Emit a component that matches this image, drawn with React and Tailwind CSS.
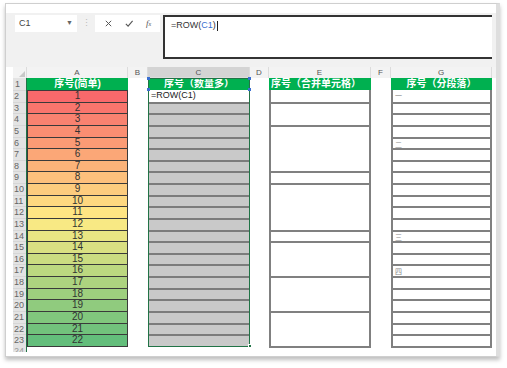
import React from "react";

const FONT = "font-['Liberation_Sans','Noto_Sans_CJK_SC',sans-serif]";
const ROWS = Array.from({ length: 22 }, (_, i) => i + 1);
const MERGED = [1, 2, 4, 1, 4, 1, 3, 3, 3];
const G_LABELS = { 1: "一", 5: "二", 13: "三", 16: "四" };
const RH = 11.64;

// excel 3-colour scale: red -> yellow -> green
function scaleColor(v) {
  const lo = [248, 105, 107];
  const mid = [255, 235, 132];
  const hi = [99, 190, 123];
  const m = 11.5;
  let a, b, t;
  if (v <= m) {
    a = lo;
    b = mid;
    t = (v - 1) / (m - 1);
  } else {
    a = mid;
    b = hi;
    t = (v - m) / (22 - m);
  }
  const c = a.map((x, i) => Math.round(x + (b[i] - x) * t));
  return `rgb(${c[0]},${c[1]},${c[2]})`;
}

function Header({ children, className = "" }) {
  return (
    <div
      className={`h-[12px] bg-[#00b050] text-white text-[10px] leading-[12px] font-bold text-center whitespace-nowrap overflow-hidden ${className}`}
    >
      {children}
    </div>
  );
}

function Toolbar() {
  return (
    <div className="h-[54px] bg-[#f1f1f1] flex items-start pt-[2px] pl-[9px] pr-[4px]">
      <div className="w-[62px] h-[17px] bg-white flex items-center justify-between px-[4px] text-[9px] text-[#444]">
        <span>C1</span>
        <span className="text-[7px] text-[#666]">▼</span>
      </div>
      <div className="w-[18px] h-[17px] flex items-center justify-center text-[9px] text-[#bbb]">⋮</div>
      <div className="w-[65px] h-[17px] bg-white flex items-center justify-around px-[3px] text-[#555]">
        <svg width="9" height="9" viewBox="0 0 10 10" fill="none" stroke="#555" strokeWidth="1.1">
          <path d="M2 2 L8 8 M8 2 L2 8" />
        </svg>
        <svg width="10" height="9" viewBox="0 0 10 10" fill="none" stroke="#555" strokeWidth="1.2">
          <path d="M1.5 5.5 L4 8 L9 2" />
        </svg>
        <span className="italic text-[9px] font-['Liberation_Serif',serif]">
          f<span className="text-[6px]">x</span>
        </span>
      </div>
      <div className="ml-[3px] flex-1 h-[44px] bg-white border-y-2 border-l-2 border-[#333] pl-[6px] pt-[3px] text-[9px] text-[#333] leading-[11px]">
        =ROW(<span className="text-[#3a6fd1]">C1</span>)
        <span className="inline-block w-px h-[10px] bg-[#222] align-middle ml-px" />
      </div>
    </div>
  );
}

function ColLetters() {
  const cols = [
    ["", "w-[14px]"],
    ["A", "w-[101px]"],
    ["B", "w-[20px]"],
    ["C", "w-[102px] bg-[#d4d4d4] border-b border-[#217346]"],
    ["D", "w-[19px]"],
    ["E", "w-[102px]"],
    ["F", "w-[20px]"],
    ["G", "w-[101px]"],
  ];
  return (
    <div className="h-[11px] flex bg-[#f3f3f3] text-[8px] text-[#555] leading-[11px]">
      {cols.map(([l, c], i) => (
        <div key={i} className={`${c} text-center border-r border-[#dcdcdc]`}>
          {i === 0 ? (
            <div className="w-0 h-0 ml-[6px] mt-[4px] border-l-[6px] border-l-transparent border-b-[6px] border-b-[#c8c8c8]" />
          ) : (
            l
          )}
        </div>
      ))}
    </div>
  );
}

function RowNums() {
  return (
    <div className="w-[14px] flex flex-col bg-[#e3e3e3] border-r border-[#217346] text-[9px] text-[#666]">
      <div className="h-[12px] leading-[12px] pl-[2px]">1</div>
      {ROWS.map((r) => (
        <div key={r} className="h-[11.64px] leading-[11.64px] pl-[1px] border-t border-[#d6d6d6]">
          {r + 1}
        </div>
      ))}
      <div className="h-[6px] leading-[11px] pl-[1px] overflow-hidden text-[#999]">24</div>
    </div>
  );
}

function ColA() {
  return (
    <div className="w-[101px] flex flex-col">
      <Header>序号(简单)</Header>
      <div className="border-x border-[#3a3a3a]">
        {ROWS.map((v) => (
          <div
            key={v}
            className="h-[11.64px] border-t border-[#3a3a3a] text-center text-[10px] leading-[10.6px] text-[#333]"
            style={{ backgroundColor: scaleColor(v) }}
          >
            {v}
          </div>
        ))}
        <div className="border-t border-[#3a3a3a]" />
      </div>
    </div>
  );
}

function ColC() {
  return (
    <div className="w-[102px] flex flex-col relative">
      <Header>序号（数量多）</Header>
      <div className="border-x border-[#8a8a8a]">
        <div className="h-[11.64px] bg-white text-[9px] leading-[11px] pl-[2px] text-[#222]">=ROW(C1)</div>
        {ROWS.slice(1).map((r) => (
          <div key={r} className="h-[11.64px] bg-[#c9c9c9] border-t-2 border-[#7c7c7c]" />
        ))}
      </div>
      <div className="absolute left-0 top-0 w-[102px] h-[269px] border border-[#217346] pointer-events-none" />
      <div className="absolute left-[-1px] top-[-1px] w-[3px] h-[3px] bg-[#3a6fd1]" />
      <div className="absolute right-[-1px] top-[-1px] w-[3px] h-[3px] bg-[#3a6fd1]" />
      <div className="absolute left-[-1px] top-[10px] w-[3px] h-[3px] bg-[#3a6fd1]" />
      <div className="absolute right-[-1px] top-[10px] w-[3px] h-[3px] bg-[#3a6fd1]" />
      <div className="absolute right-[-2px] top-[266px] w-[4px] h-[4px] bg-[#217346] border border-white" />
    </div>
  );
}

function ColE() {
  return (
    <div className="w-[102px] flex flex-col">
      <Header className="text-left pl-[2px]">序号（合并单元格）</Header>
      <div className="border-x-2 border-[#808080]">
        {MERGED.map((n, i) => (
          <div
            key={i}
            className={`bg-white ${i > 0 ? "border-t-2 border-[#808080]" : ""}`}
            style={{ height: `${n * RH}px` }}
          />
        ))}
        <div className="border-t-2 border-[#808080]" />
      </div>
    </div>
  );
}

function ColG() {
  return (
    <div className="w-[101px] flex flex-col">
      <Header>序号（分段落）</Header>
      <div className="border-x-2 border-[#808080]">
        {ROWS.map((r) => (
          <div
            key={r}
            className={`h-[11.64px] bg-white text-[7px] leading-[11px] pl-[2px] text-[#888] ${r > 1 ? "border-t-2 border-[#808080]" : ""}`}
          >
            {G_LABELS[r] || ""}
          </div>
        ))}
        <div className="border-t-2 border-[#808080]" />
      </div>
    </div>
  );
}

export default function App() {
  return (
    <div className={`w-[507px] h-[368px] bg-white pl-[5px] pt-[3px] ${FONT}`}>
      <div className="w-[495px] h-[354px] bg-white border border-[#cfcfcf] border-r-4 border-r-[#dedede] shadow-[0_3px_4px_rgba(0,0,0,0.25)] flex flex-col overflow-hidden">
        <div className="h-[9px]" />
        <Toolbar />
        <div className="pl-[7px] flex flex-col">
          <ColLetters />
          <div className="flex items-start">
            <RowNums />
            <ColA />
            <div className="w-[20px]" />
            <ColC />
            <div className="w-[19px]" />
            <ColE />
            <div className="w-[20px]" />
            <ColG />
          </div>
        </div>
      </div>
    </div>
  );
}
